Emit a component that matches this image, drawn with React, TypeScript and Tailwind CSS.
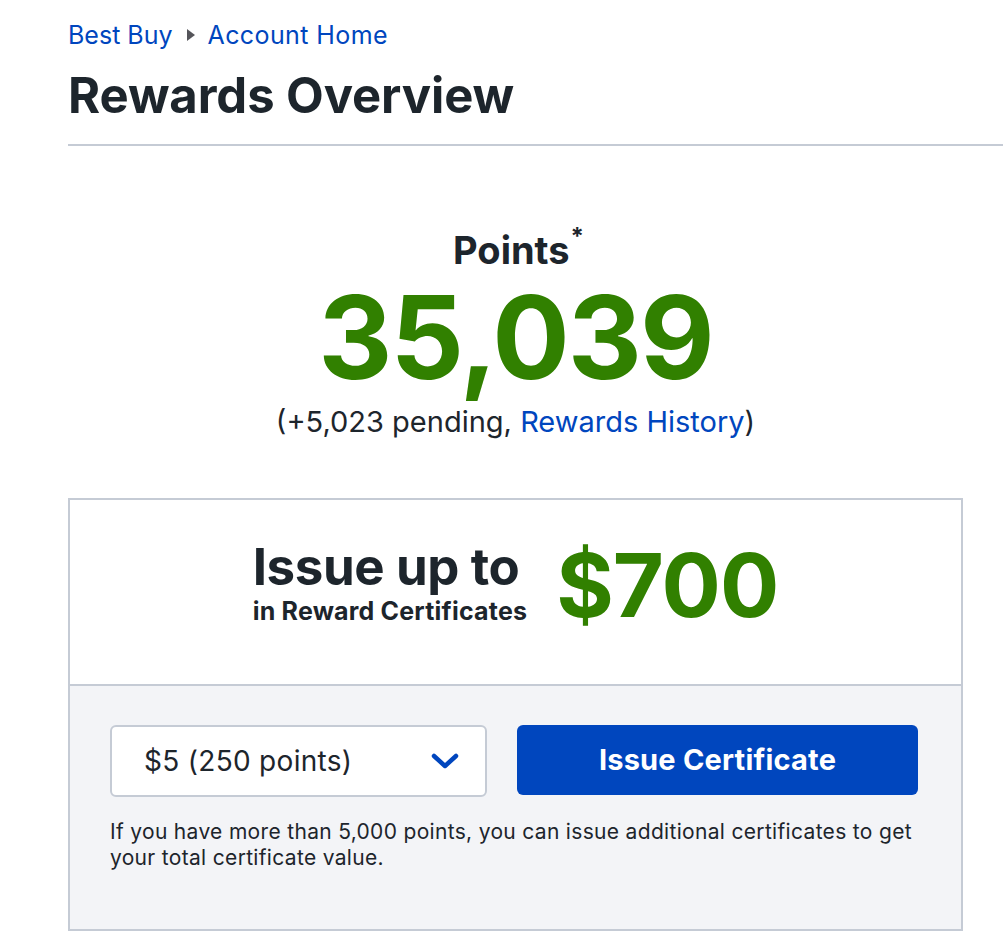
import React from "react";

export default function App() {
  return (
    <div className="min-h-[935px] bg-white text-[#1d252c]" style={{ fontFamily: "Inter, 'Noto Sans', sans-serif" }}>
      <div className="pl-[68px] pt-[20px]">
        <nav className="flex items-center h-[30px] text-[25px] leading-[30px] text-[#0046be]">
          <span>Best Buy</span>
          <svg className="ml-[13px] mr-[12px]" width="10" height="14" viewBox="0 0 10 14">
            <path d="M1 1 L9 7 L1 13 Z" fill="#55555a" />
          </svg>
          <span className="tracking-[0.4px]">Account Home</span>
        </nav>
        <h1 className="mt-[18px] text-[49px] leading-[56px] font-bold tracking-[-0.1px]">Rewards Overview</h1>
        <div className="mt-[20px] h-[2px] bg-[#c5cbd5]" />
        <div className="w-[895px]">
          <div className="mt-[82px] flex flex-col items-center">
            <div className="text-[38px] leading-[44px] font-bold pl-[6px]">
              Points<span className="relative top-[-19px] ml-[1px] text-[24px] leading-none">*</span>
            </div>
            <div className="mt-[6px] text-[115px] leading-[120px] font-bold text-[#318000] tracking-[-2px]">35,039</div>
            <div className="mt-[6px] text-[29px] leading-[36px]">
              (+5,023 pending, <span className="text-[#0046be]">Rewards History</span>)
            </div>
          </div>
          <div className="mt-[58px] border-2 border-[#c5cbd5]">
            <div className="h-[184px] flex items-center justify-center gap-[29px] bg-white pb-[14px]">
              <div className="flex flex-col items-start pb-[2px]">
                <div className="text-[51px] leading-[54px] font-bold tracking-[-0.4px]">Issue up to</div>
                <div className="text-[25px] leading-[34px] font-bold tracking-[0.2px]">in Reward Certificates</div>
              </div>
              <div className="text-[88px] leading-[90px] font-bold text-[#318000] tracking-[-1px]">$700</div>
            </div>
            <div className="border-t-2 border-[#c5cbd5] bg-[#f3f4f7] px-[40px] pt-[39px] pb-[58px]">
              <div className="flex gap-[30px]">
                <div className="w-[377px] h-[72px] rounded-[6px] border-2 border-[#c5cbd5] bg-white flex items-center justify-between pl-[32px] pr-[26px]">
                  <span className="text-[28px] tracking-[0.3px]">$5 (250 points)</span>
                  <svg width="28" height="18" viewBox="0 0 28 18">
                    <path d="M3 4 L14 14 L25 4" fill="none" stroke="#0046be" strokeWidth="4.5" strokeLinecap="round" strokeLinejoin="round" />
                  </svg>
                </div>
                <button className="w-[401px] h-[70px] rounded-[6px] bg-[#0046be] text-white text-[29px] font-bold tracking-[0.2px]">
                  Issue Certificate
                </button>
              </div>
              <p className="mt-[22px] text-[21px] leading-[26px] w-[820px] tracking-[0.32px]">
                If you have more than 5,000 points, you can issue additional certificates to get your total certificate value.
              </p>
            </div>
          </div>
        </div>
      </div>
    </div>
  );
}
